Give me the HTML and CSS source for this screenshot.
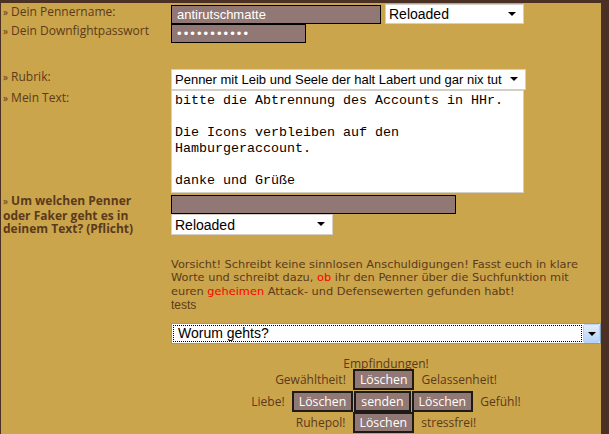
FILE: index.html
```html
<!DOCTYPE html>
<html>
<head>
<meta charset="utf-8">
<link rel="stylesheet" href="styles.css">
</head>
<body>
<div class="page">
  <div class="row r-name">
    <div class="label"><span class="raq">»</span> Dein Pennername:</div>
    <div class="field">
      <input class="inp inp-name" type="text" value="antirutschmatte">
      <span class="sel sel-game"><select><option>Reloaded</option></select></span>
    </div>
  </div>
  <div class="row r-pass">
    <div class="label"><span class="raq">»</span> Dein Downfightpasswort</div>
    <div class="field">
      <input class="inp inp-pass" type="password" value="abcdefghijk">
    </div>
  </div>
  <div class="row r-rubrik">
    <div class="label"><span class="raq">»</span> Rubrik:</div>
    <div class="field">
      <span class="sel sel-rubrik"><select><option>Penner mit Leib und Seele der halt Labert und gar nix tut</option></select></span>
    </div>
  </div>
  <div class="row r-text">
    <div class="label"><span class="raq">»</span> Mein Text:</div>
    <div class="field">
      <textarea class="txt">bitte die Abtrennung des Accounts in HHr.

Die Icons verbleiben auf den Hamburgeraccount.

danke und Grüße</textarea>
    </div>
  </div>
  <div class="row r-penner">
    <div class="label bold"><span class="raq">»</span> Um welchen Penner<br>oder Faker geht es in<br>deinem Text? (Pflicht)</div>
    <div class="field stack">
      <input class="inp inp-penner" type="text" value="">
      <span class="sel sel-game2"><select><option>Reloaded</option></select></span>
    </div>
  </div>
  <div class="row r-note">
    <div class="label"></div>
    <div class="field note">
      <p>Vorsicht! Schreibt keine sinnlosen Anschuldigungen! Fasst euch in klare Worte und schreibt dazu, <span class="red">ob</span> ihr den Penner über die Suchfunktion mit euren <span class="red">geheimen</span> Attack- und Defensewerten gefunden habt!</p>
      <p class="tests">tests</p>
    </div>
  </div>
  <div class="row r-worum">
    <div class="label"></div>
    <div class="field">
      <div class="xpsel">
        <div class="xpval"><span class="xpfocus">Worum gehts?</span></div>
        <div class="xpbtn"><span class="tri"></span></div>
      </div>
    </div>
  </div>
  <div class="row r-buttons">
    <div class="label"></div>
    <div class="field btns">
      <div class="brow">Empfindungen!</div>
      <div class="brow">Gewähltheit! <button class="btn">Löschen</button> Gelassenheit!</div>
      <div class="brow">Liebe! <span class="grp"><button class="btn">Löschen</button><button class="btn">senden</button><button class="btn">Löschen</button></span> Gefühl!</div>
      <div class="brow">Ruhepol! <button class="btn">Löschen</button> stressfrei!</div>
    </div>
  </div>
</div>
</body>
</html>
```

FILE: styles.css
```css
html, body {
  margin: 0;
  padding: 0;
  background: #4b3024;
}
.page {
  width: 600px;
  height: 431px;
  margin-top: 3px;
  margin-left: 1px;
  background: #cba54b;
  font-family: "Open Sans", "Noto Sans", sans-serif;
  font-size: 12px;
  color: #5a3a1c;
  padding-top: 1px;
  box-sizing: border-box;
  overflow: hidden;
}
.row {
  display: flex;
}
.label {
  width: 170px;
  flex: none;
  padding-left: 2px;
  box-sizing: border-box;
  line-height: 14px;
  padding-top: 1px;
}
.label.bold {
  font-weight: bold;
  font-size: 12px;
  line-height: 13.5px;
  padding-top: 0;
}
.raq {
  font-size: 10px;
  font-weight: normal;
}
.field {
  flex: 1;
  display: flex;
  align-items: flex-start;
}
.stack {
  flex-direction: column;
}
.inp {
  box-sizing: border-box;
  height: 19px;
  border: 1px solid #000;
  background: #917874;
  color: #fff;
  font-family: "Liberation Sans", Arial, sans-serif;
  font-size: 13px;
  padding: 0 5px;
  margin: 1px 0 0 0;
  outline: none;
}
.inp-name { width: 210px; }
.inp-pass { width: 135px; margin-top: 0; letter-spacing: 2.1px; font-size: 13px; }
.inp-penner { width: 285px; margin-top: 1px; }
.sel {
  position: relative;
  display: inline-block;
  box-sizing: border-box;
  background: #fff;
  border: 1px solid #d4d0c8;
  height: 20px;
}
.sel select {
  appearance: none;
  -webkit-appearance: none;
  border: none;
  background: transparent;
  width: 100%;
  height: 100%;
  font-family: "Liberation Sans", Arial, sans-serif;
  font-size: 14px;
  color: #000;
  padding: 0 0 0 3px;
  margin: 0;
  outline: none;
}
.sel::after {
  content: "";
  position: absolute;
  right: 7px;
  top: 7px;
  border-left: 4px solid transparent;
  border-right: 4px solid transparent;
  border-top: 4px solid #000;
}
.sel-game { width: 139px; margin-left: 4px; }
.sel-rubrik { width: 355px; height: 21px; }
.sel-rubrik select { font-size: 13px; }
.sel-game2 { width: 162px; height: 21px; margin-top: 0; }
.r-pass .label { padding-top: 0; }
.r-rubrik { margin-top: 26px; }
.r-text { margin-top: 0; }
.txt {
  box-sizing: border-box;
  width: 353px;
  height: 103px;
  border: 1px solid #d4d0c8;
  background: #fff;
  font-family: "Liberation Mono", "Courier New", monospace;
  font-size: 13.33px;
  line-height: 16px;
  padding: 2px 3px;
  margin: 0;
  resize: none;
  overflow: hidden;
  color: #000;
  outline: none;
}
.r-penner { margin-top: 1px; }
.r-note { margin-top: 22px; }
.note {
  display: block;
  font-family: "DejaVu Sans", Verdana, sans-serif;
  font-size: 11.35px;
  line-height: 13.7px;
  padding-right: 12px;
}
.note p { margin: 0; }
.red { color: #ff0000; }
.tests {
  font-family: "Liberation Sans", Arial, sans-serif;
  font-size: 12px;
}
.r-worum { margin-top: 11px; }
.xpsel {
  width: 430px;
  height: 21px;
  box-sizing: border-box;
  border: 1px solid #7f9db9;
  background: #fff;
  display: flex;
}
.xpval {
  flex: 1;
  padding: 1px;
  display: flex;
}
.xpfocus {
  flex: 1;
  border: 1px dotted #000;
  font-family: "Liberation Sans", Arial, sans-serif;
  font-size: 14px;
  line-height: 15px;
  padding-left: 4px;
  color: #000;
}
.xpbtn {
  width: 17px;
  margin: 0;
  box-sizing: border-box;
  border: 1px solid #b9d2f5;
  border-radius: 2px;
  background: linear-gradient(#e3eefc, #b4d2f6);
  position: relative;
}
.tri {
  position: absolute;
  left: 4px;
  top: 7px;
  border-left: 4px solid transparent;
  border-right: 4px solid transparent;
  border-top: 4px solid #000;
}
.r-buttons { margin-top: 11px; }
.btns {
  flex-direction: column;
  align-items: center;
}
.brow {
  display: flex;
  align-items: center;
  gap: 4px;
  height: 21.3px;
  white-space: pre;
}
.brow:first-child { height: 14px; align-items: flex-start; }
.grp { display: flex; gap: 1px; }
.btn {
  box-sizing: border-box;
  height: 21px;
  border: 2px solid #1e1a18;
  background: #917874;
  color: #fff;
  font-family: "Open Sans", "Noto Sans", sans-serif;
  font-size: 12.3px;
  line-height: 15px;
  padding: 0 5px;
  margin: 0;
}
```
